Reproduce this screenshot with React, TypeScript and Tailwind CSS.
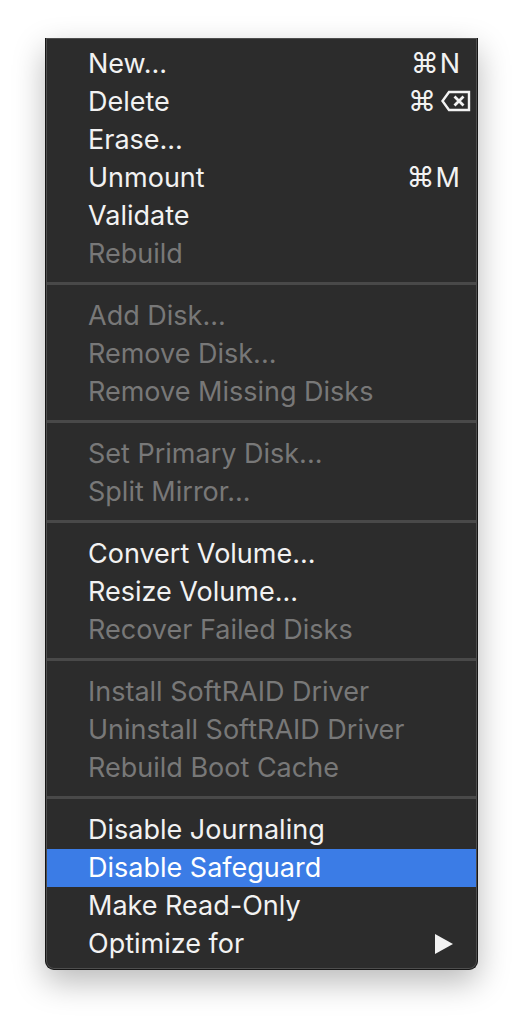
import React from "react";

type Item =
  | { kind: "item"; label: string; disabled?: boolean; shortcut?: React.ReactNode; highlight?: boolean; submenu?: boolean }
  | { kind: "sep" };

const Cmd = () => <span className="mr-[1px] text-[28px]">⌘</span>;

const DeleteKey = () => (
  <svg width="30" height="22" viewBox="0 0 30 22" className="ml-[4px] mr-[-11px]">
    <path d="M8 2 H28 V20 H8 L1.5 11 Z" fill="none" stroke="#f2f2f2" strokeWidth="2.4" strokeLinejoin="miter" />
    <path d="M13.5 6.5 L22.5 15.5 M22.5 6.5 L13.5 15.5" stroke="#f2f2f2" strokeWidth="2.8" strokeLinecap="butt" />
  </svg>
);

const items: Item[] = [
  { kind: "item", label: "New...", shortcut: <><Cmd /><span>N</span></> },
  { kind: "item", label: "Delete", shortcut: <><Cmd /><DeleteKey /></> },
  { kind: "item", label: "Erase..." },
  { kind: "item", label: "Unmount", shortcut: <><Cmd /><span>M</span></> },
  { kind: "item", label: "Validate" },
  { kind: "item", label: "Rebuild", disabled: true },
  { kind: "sep" },
  { kind: "item", label: "Add Disk...", disabled: true },
  { kind: "item", label: "Remove Disk...", disabled: true },
  { kind: "item", label: "Remove Missing Disks", disabled: true },
  { kind: "sep" },
  { kind: "item", label: "Set Primary Disk...", disabled: true },
  { kind: "item", label: "Split Mirror...", disabled: true },
  { kind: "sep" },
  { kind: "item", label: "Convert Volume..." },
  { kind: "item", label: "Resize Volume..." },
  { kind: "item", label: "Recover Failed Disks", disabled: true },
  { kind: "sep" },
  { kind: "item", label: "Install SoftRAID Driver", disabled: true },
  { kind: "item", label: "Uninstall SoftRAID Driver", disabled: true },
  { kind: "item", label: "Rebuild Boot Cache", disabled: true },
  { kind: "sep" },
  { kind: "item", label: "Disable Journaling" },
  { kind: "item", label: "Disable Safeguard", highlight: true },
  { kind: "item", label: "Make Read-Only" },
  { kind: "item", label: "Optimize for", submenu: true },
];

export default function App() {
  return (
    <div className="w-[523px] h-[1024px] bg-white pt-[38px] pl-[45px]" style={{ fontFamily: "Inter, 'Liberation Sans', 'DejaVu Sans', sans-serif" }}>
      <div className="w-[433px] rounded-b-[9px] border border-t-0 border-[#161616] bg-[#2c2c2c] shadow-[0_12px_32px_rgba(0,0,0,0.28),inset_0_0_0_1px_#4e4e4e]">
        <div className="px-[1px] pt-[7px] pb-[6px]">
          {items.map((it, i) =>
            it.kind === "sep" ? (
              <div key={i} className="h-[24px] pt-[9px]">
                <div className="h-[3px] bg-[#494949]" />
              </div>
            ) : (
              <div
                key={i}
                className={`h-[38px] flex items-center pl-[41px] pr-[16px] pb-[2px] text-[27px] leading-none ${
                  it.highlight ? "bg-[#3b7ce6] text-white" : it.disabled ? "text-[#787878]" : "text-[#f2f2f2]"
                }`}
              >
                <span className="flex-1 whitespace-nowrap">{it.label}</span>
                {it.shortcut && <span className="flex items-center text-[#f2f2f2]">{it.shortcut}</span>}
                {it.submenu && (
                  <svg width="18" height="20" viewBox="0 0 18 20" className="mr-[7px] mt-[2px]">
                    <polygon points="0,0 18,10 0,20" fill="#f2f2f2" />
                  </svg>
                )}
              </div>
            )
          )}
        </div>
      </div>
    </div>
  );
}
